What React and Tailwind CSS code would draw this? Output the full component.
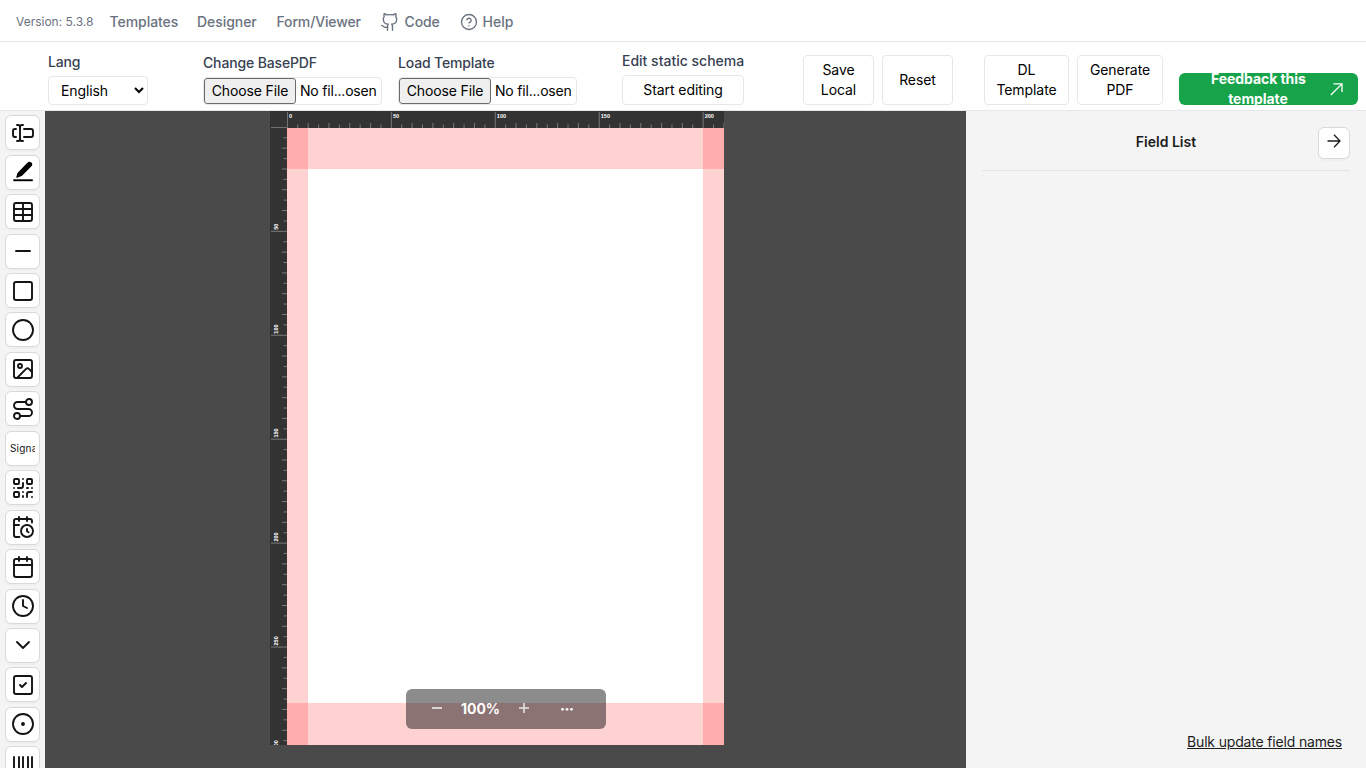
import React from "react";
import {
  TextCursorInput, Table, Minus, Square, Circle, Image, Route, QrCode, CalendarClock,
  Calendar, Clock, ChevronDown, SquareCheck, CircleDot, Barcode, Github, CircleHelp,
} from "lucide-react";

const SCALE = 2.0787;

function PenIcon() {
  return (
    <svg width="24" height="24" viewBox="0 0 24 24" fill="#000">
      <path d="M5.900 17.200 7 13.400 16.800 3.200C17.700 2.300 19 2.200 19.900 3S20.900 5 20 5.900L10.300 15.500Z" stroke="#000" strokeWidth="1.300" strokeLinejoin="round" />
      <rect x="2.300" y="19.300" width="19.500" height="1.900" />
    </svg>
  );
}

const tools = [
  TextCursorInput, PenIcon, Table, Minus, Square, Circle, Image, Route, null, QrCode,
  CalendarClock, Calendar, Clock, ChevronDown, SquareCheck, CircleDot, Barcode,
];

function NavBar() {
  return (
    <nav className="flex h-[42px] items-center border-b border-gray-200 pb-px pt-[3px] pl-4 text-sm font-medium text-[#6b7280]">
      <span className="w-[93.5px] whitespace-nowrap pt-px text-xs font-normal">Version: 5.3.8</span>
      <a className="w-[87.5px] tracking-[-0.05px]">Templates</a>
      <a className="w-[79.5px] tracking-[-0.05px]">Designer</a>
      <a className="w-[103px] tracking-[-0.15px]">Form/Viewer</a>
      <a className="flex w-[80px] items-center gap-[5px] tracking-[-0.1px]"><Github size={20} strokeWidth={1.7} />Code</a>
      <a className="flex items-center gap-[5px]"><CircleHelp size={18} strokeWidth={1.8} />Help</a>
    </nav>
  );
}

function FileField({ label }) {
  return (
    <div className="w-[179px]">
      <div className="mb-1 h-5 font-medium leading-5 tracking-[-0.15px] text-[#374151]">{label}</div>
      <div className="flex h-7 items-center overflow-hidden whitespace-nowrap rounded border border-gray-200 tracking-[-0.13px] text-black">
        <span className="flex h-[26px] w-[92px] shrink-0 items-center justify-center rounded-[3px] border border-[#6b6b6b] bg-[#efefef]">Choose File</span>
        <span className="ml-1 tracking-[-0.2px]">No fil...osen</span>
      </div>
    </div>
  );
}

function Controls() {
  const btn = "flex shrink-0 items-center justify-center rounded border border-gray-200 text-center leading-5 tracking-[-0.07px] text-black";
  return (
    <header className="flex h-[69px] items-end border-b border-gray-200 pb-[5px] pl-12 text-sm">
      <div className="mr-[55px] w-[100px]">
        <div className="mb-1 h-5 font-medium leading-5 tracking-[-0.15px] text-[#374151]">Lang</div>
        <select className="block h-[29px] w-full rounded border border-gray-200 bg-white px-2 tracking-[-0.13px] text-black">
          <option>English</option>
        </select>
      </div>
      <div className="mr-4"><FileField label="Change BasePDF" /></div>
      <div className="mr-[45px]"><FileField label="Load Template" /></div>
      <div className="mr-[59px] w-[122px]">
        <div className="mb-1 h-5 whitespace-nowrap font-medium leading-5 text-[#374151]">Edit static schema</div>
        <button className={btn + " h-[30px] w-full"}>Start editing</button>
      </div>
      <button className={btn + " mr-2 h-[50px] w-[71px]"}>Save<br />Local</button>
      <button className={btn + " mr-[31px] h-[50px] w-[71px]"}>Reset</button>
      <button className={btn + " mr-2 h-[50px] w-[85px]"}>DL<br />Template</button>
      <button className={btn + " mr-4 h-[50px] w-[86px]"}>Generate<br />PDF</button>
      <button className="flex h-8 w-[179px] shrink-0 items-center overflow-hidden rounded-md bg-[#16a34a] pl-8 text-center font-bold leading-5 text-white">
        <span className="w-[94px] whitespace-nowrap tracking-[-0.07px]">Feedback this<br />template</span>
        <svg className="ml-[25px]" width="13" height="13" viewBox="0 0 13 13" fill="none" stroke="white" strokeWidth="1.3"><path d="M.8 12 12 .900M3.500.900H12V9" /></svg>
      </button>
    </header>
  );
}

function ToolBar() {
  return (
    <aside className="flex w-[45px] shrink-0 flex-col items-center gap-[4.45px] overflow-hidden bg-[#f4f4f4] pt-[4.300px]">
      {tools.map((Icon, i) => (
        <button key={i} className="flex h-[35px] w-[35px] shrink-0 items-center justify-center overflow-hidden rounded-md border border-[#d9d9d9] bg-white text-[#141414] shadow-[0_2px_0_rgba(0,0,0,0.02)]">
          {Icon ? <Icon size={24} strokeWidth={1.9} className="shrink-0" /> : <span className="w-[25px] overflow-hidden whitespace-nowrap text-left text-[10px] tracking-[.2px]">Signature</span>}
        </button>
      ))}
    </aside>
  );
}

function Ruler({ vertical, length }) {
  const marks = Array.from({ length: Math.floor(length / 5) + 1 }, (_, i) => i * 5);
  const px = length * SCALE + (vertical ? 0.7 : 0);
  return (
    <svg width={vertical ? 17 : px} height={vertical ? px : 17} className={vertical ? "-mt-px block shrink-0 bg-[#333]" : "block shrink-0 bg-[#333]"}>
      {marks.map((m) => {
        const size = m % 50 === 0 ? 16 : m % 10 === 0 ? 5 : 3.5;
        const p = m * SCALE + 0.4;
        return vertical
          ? <line key={m} x1={17 - size} x2="17" y1={p} y2={p} stroke="#909090" strokeWidth=".75" />
          : <line key={m} y1={17 - size} y2="17" x1={p} x2={p} stroke="#909090" strokeWidth=".75" />;
      })}
      {[0, 50, 100, 150, 200, 250, 300].filter((m) => m <= length + 5 && !(vertical && m === 0)).map((m) => {
        const p = m * SCALE;
        return (
          <text key={m} fill="#fff" className="font-['Liberation_Sans'] text-[5.5px] font-bold"
            transform={vertical ? `translate(7.500 ${p - 1.2}) rotate(-90)` : `translate(${p + 2} 7)`}>{m}</text>
        );
      })}
    </svg>
  );
}

function Canvas() {
  return (
    <main className="relative flex-1 overflow-hidden bg-[#4a4a4a] pl-[225px]">
      <div className="flex">
        <div className="h-[17px] w-[17px] shrink-0 border-b border-[#777] bg-[#333]" />
        <Ruler length={210} />
      </div>
      <div className="flex items-start">
        <Ruler vertical length={297} />
        <div className="relative -mt-[.5px] h-[617.300px] w-[436.500px] bg-white">
          <div className="absolute inset-x-0 top-0 h-[41.600px] bg-[#ff0000]/[.177]" />
          <div className="absolute inset-x-0 bottom-0 h-[41.600px] bg-[#ff0000]/[.177]" />
          <div className="absolute inset-y-0 left-0 w-[20.800px] bg-[#ff0000]/[.177]" />
          <div className="absolute inset-y-0 right-0 w-[20.800px] bg-[#ff0000]/[.177]" />
        </div>
      </div>
      <div className="absolute left-[361px] top-[578px] flex h-10 w-[200px] items-center rounded-md bg-black/45 pl-[25px] text-sm font-bold text-white">
        <svg width="12" height="12" viewBox="0 0 12 12" stroke="#e8e8e8" strokeWidth="1.700"><path d="M1 5H11" /></svg>
        <span className="w-[75px] text-center">100%</span>
        <svg width="12" height="12" viewBox="0 0 12 12" stroke="#e8e8e8" strokeWidth="1.500"><path d="M1 5H11M6 0V10" /></svg>
        <svg className="ml-[30px]" width="14" height="12" viewBox="0 0 14 12" fill="white"><circle cx="2.500" cy="6.300" r="1.400" /><circle cx="7" cy="6.300" r="1.400" /><circle cx="11.500" cy="6.300" r="1.400" /></svg>
      </div>
    </main>
  );
}

function FieldPanel() {
  return (
    <aside className="flex w-[400px] shrink-0 flex-col bg-[#f4f4f4] px-4 pt-4 text-sm text-[#1c1c1c]">
      <div className="flex h-11 items-start border-b border-[#e3e3e3]">
        <h2 className="ml-8 flex-1 pt-[5px] text-center font-semibold leading-5">Field List</h2>
        <button className="flex h-8 w-8 items-center justify-center rounded-md border border-[#d9d9d9] bg-white pb-1 shadow-[0_2px_0_rgba(0,0,0,0.02)]">
          <svg width="14" height="14" viewBox="0 0 14 14" fill="none" stroke="currentColor" strokeWidth="1.300"><path d="M.5 7H13M7 .800 13 7 7 13.200" /></svg>
        </button>
      </div>
      <a className="mb-4 mr-2 mt-auto self-end leading-5 tracking-[-0.17px] underline">Bulk update field names</a>
    </aside>
  );
}

export default function App() {
  return (
    <div className="flex h-screen flex-col overflow-hidden bg-white font-['Inter',sans-serif]">
      <NavBar />
      <Controls />
      <div className="flex min-h-0 flex-1">
        <ToolBar />
        <Canvas />
        <FieldPanel />
      </div>
    </div>
  );
}
